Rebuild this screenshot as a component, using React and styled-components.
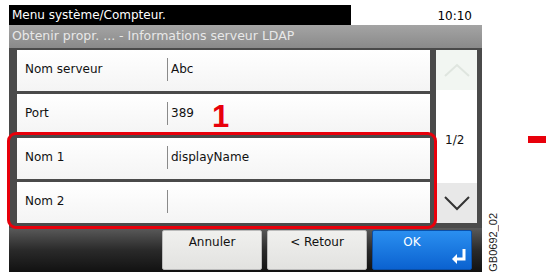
import React from "react";
import styled, { createGlobalStyle } from "styled-components";

const GlobalStyle = createGlobalStyle`
    body {
        margin: 0;
        background: #ffffff;
        font-family: "DejaVu Sans", Verdana, sans-serif;
    }
`;

const Page = styled.div`
    width: 546px;
    height: 279px;
    display: flex;
    padding: 5px 0 0 9px;
    box-sizing: border-box;
`;

const Screen = styled.div`
    position: relative;
    width: 473px;
    display: flex;
    flex-direction: column;
`;

const TopBar = styled.div`
    height: 20px;
    display: flex;
`;

const Title = styled.div`
    width: 342px;
    background: #000000;
    color: #ffffff;
    font-size: 12px;
    line-height: 20px;
    padding-left: 3px;
    box-sizing: border-box;
`;

const Clock = styled.div`
    flex: 1;
    text-align: right;
    padding-right: 10px;
    font-size: 12px;
    line-height: 22px;
    color: #000000;
`;

const SubBar = styled.div`
    height: 23px;
    background: linear-gradient(#a4a4a4, #8a8a8a);
    color: #e8e8e8;
    font-size: 12.5px;
    line-height: 22px;
    padding-left: 3px;
`;

const Body = styled.div`
    background: #4a4a4a;
    display: flex;
    padding: 2px 5px 5px 8px;
`;

const List = styled.div`
    flex: 1;
    display: flex;
    flex-direction: column;
    gap: 3px;
    margin-right: 6px;
`;

const Row = styled.div`
    height: 41px;
    display: flex;
    align-items: center;
    background: linear-gradient(#ffffff, #f4f4f4);
    font-size: 12px;
    color: #111111;
`;

const Label = styled.div`
    width: 150px;
    padding-left: 8px;
    box-sizing: border-box;
    margin-top: -3px;
`;

const Value = styled.div`
    flex: 1;
    height: 23px;
    border-left: 1px solid #8a8a8a;
    padding-left: 3px;
    display: flex;
    align-items: center;
    margin-top: -3px;
`;

const Scroller = styled.div`
    width: 41px;
    background: #ffffff;
    display: flex;
    flex-direction: column;
    justify-content: space-between;
    align-items: stretch;
`;

const ArrowBox = styled.div`
    height: 40px;
    display: flex;
    align-items: center;
    justify-content: center;
    background: ${(p) => (p.$disabled ? "#f2f6f2" : "#e8e8e8")};
`;

const PageNum = styled.div`
    font-size: 12px;
    color: #111111;
    padding-left: 9px;
    margin-top: 6px;
`;

const Footer = styled.div`
    height: 44px;
    background: linear-gradient(#5a5a5a, #2a2a2a 50%, #111111);
    display: flex;
    justify-content: flex-end;
    gap: 5px;
    padding: 2px 10px 0 0;
    box-sizing: border-box;
`;

const Button = styled.div`
    position: relative;
    width: 100px;
    height: 40px;
    box-sizing: border-box;
    background: ${(p) =>
        p.$primary ? "linear-gradient(#2a8ff0, #0b62d0)" : "linear-gradient(#f0f0ee, #e2e2e0)"};
    color: ${(p) => (p.$primary ? "#ffffff" : "#111111")};
    border: 1px solid ${(p) => (p.$primary ? "#0a4fa8" : "#bbbbbb")};
    border-radius: 2px;
    font-size: 12px;
    text-align: center;
    padding-top: 4px;
    padding-right: ${(p) => (p.$primary ? "20px" : "0")};
`;

const EnterIcon = styled.svg`
    position: absolute;
    right: 4px;
    bottom: 4px;
`;

const Highlight = styled.div`
    position: absolute;
    left: -2px;
    top: 127px;
    width: 430px;
    height: 97px;
    border: 3px solid #e8000b;
    border-radius: 9px;
    box-sizing: border-box;
    pointer-events: none;
`;

const StepNumber = styled.div`
    position: absolute;
    left: 203px;
    top: 94px;
    color: #e8000b;
    font-family: "Liberation Sans", Arial, sans-serif;
    font-weight: bold;
    font-size: 31px;
`;

const Aside = styled.div`
    flex: 1;
    display: flex;
    flex-direction: column;
    padding-left: 5px;
`;

const Marker = styled.div`
    align-self: flex-end;
    width: 18px;
    height: 7px;
    background: #e8000b;
    margin-top: 131px;
`;

const Code = styled.div`
    writing-mode: vertical-rl;
    transform: rotate(180deg);
    font-family: "Liberation Sans", Arial, sans-serif;
    font-size: 11px;
    color: #222222;
    margin-top: 70px;
`;

const rows = [
    { label: "Nom serveur", value: "Abc" },
    { label: "Port", value: "389" },
    { label: "Nom 1", value: "displayName" },
    { label: "Nom 2", value: "" },
];

export default function App() {
    return (
        <Page>
            <GlobalStyle />
            <Screen>
                <TopBar>
                    <Title>Menu système/Compteur.</Title>
                    <Clock>10:10</Clock>
                </TopBar>
                <SubBar>Obtenir propr. ... - Informations serveur LDAP</SubBar>
                <Body>
                    <List>
                        {rows.map((r) => (
                            <Row key={r.label}>
                                <Label>{r.label}</Label>
                                <Value>{r.value}</Value>
                            </Row>
                        ))}
                    </List>
                    <Scroller>
                        <ArrowBox $disabled>
                            <svg width="26" height="14" viewBox="0 0 26 14">
                                <path d="M1 13 L13 2 L25 13" fill="none" stroke="#dfe5df" strokeWidth="2" />
                            </svg>
                        </ArrowBox>
                        <PageNum>1/2</PageNum>
                        <ArrowBox>
                            <svg width="26" height="16" viewBox="0 0 26 16">
                                <path d="M1 2 L13 14 L25 2" fill="none" stroke="#333333" strokeWidth="2" />
                            </svg>
                        </ArrowBox>
                    </Scroller>
                </Body>
                <Footer>
                    <Button>Annuler</Button>
                    <Button>&lt; Retour</Button>
                    <Button $primary>
                        OK
                        <EnterIcon width="16" height="17" viewBox="0 0 16 17">
                            <path d="M13 1 V11 H4" fill="none" stroke="#ffffff" strokeWidth="3" />
                            <path d="M1 11 L6 6 V16 Z" fill="#ffffff" />
                        </EnterIcon>
                    </Button>
                </Footer>
                <StepNumber>1</StepNumber>
                <Highlight />
            </Screen>
            <Aside>
                <Marker />
                <Code>GB0692_02</Code>
            </Aside>
        </Page>
    );
}
